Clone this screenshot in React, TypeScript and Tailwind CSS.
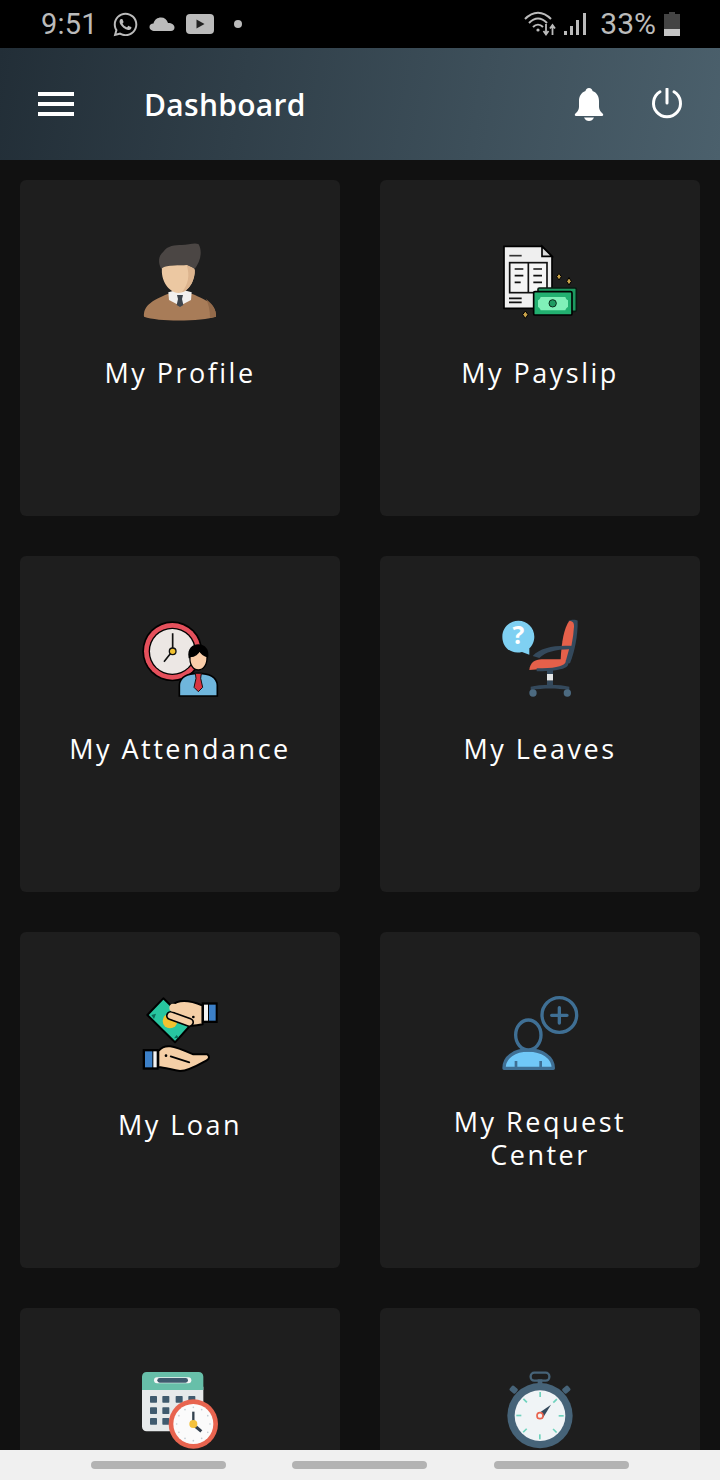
import React from 'react';
import { FaWhatsapp } from 'react-icons/fa';

const ProfileIcon = () => (
  <svg viewBox="0 0 300 285" className="w-[100px] h-[95px]">
    <path d="M94 102C84 84 84 64 100 50C112 32 135 30 155 30C175 30 195 22 206 28C218 50 212 80 192 105L170 90C140 92 110 88 96 104Z" fill="#4b4644" />
    <path d="M42 245C40 215 60 198 115 176L150 190L185 176C240 198 260 215 258 245C220 258 90 262 42 245Z" fill="#a87c58" />
    <path d="M228 192C245 205 258 220 258 245L240 248C240 225 236 208 228 192Z" fill="#936a4a" />
    <path d="M115 172L140 165H160L185 172L183 195L150 212L117 195Z" fill="#f2f0ee" />
    <path d="M141 180H159L156 192L160 210L150 216L140 210L144 192Z" fill="#3d444c" />
    <path d="M96 100C110 88 150 92 170 90C180 95 190 98 194 104C196 130 180 172 145 174C115 172 92 135 96 100Z" fill="#ecc8a2" />
    <path d="M170 90C180 95 190 98 194 104C196 130 180 165 155 172C175 150 180 120 170 90Z" fill="#dcb48e" />
  </svg>
);

const PayslipIcon = () => (
  <svg viewBox="0 0 300 285" className="w-[100px] h-[95px]">
    <path d="M42 34H156L186 64V190H140V220H42Z" fill="#efefef" stroke="#000" strokeWidth="5" />
    <path d="M156 34V64H186Z" fill="#d9d9d9" stroke="#000" strokeWidth="5" />
    <path d="M58 62H95" stroke="#333" strokeWidth="5" />
    <rect x="59" y="83" width="112" height="90" fill="#f5f5f5" stroke="#111" strokeWidth="5" />
    <path d="M115 83V173" stroke="#111" strokeWidth="5" />
    <path d="M74 102H100M74 122H100M74 142H92M130 102H156M130 122H156M130 142H156M57 190H95M57 202H95" stroke="#111" strokeWidth="5" />
    <rect x="144" y="159" width="115" height="70" rx="4" fill="#1d9a60" stroke="#0a1a12" strokeWidth="5" />
    <rect x="131" y="170" width="115" height="70" rx="4" fill="#22b070" stroke="#000" strokeWidth="5" />
    <path d="M152 186H226C228 192 230 194 234 196V216C230 218 228 220 226 226H152C150 220 148 218 144 216V196C148 194 150 192 152 186Z" fill="#80f0b8" />
    <circle cx="188" cy="205" r="11" fill="#1f9c62" stroke="#0a2a1a" strokeWidth="3" />
    <path d="M207 115L214 125L207 135L200 125ZM237 128L244 139L237 150L230 139ZM106 228L114 239L106 250L98 239Z" fill="#c8a24a" stroke="#000" strokeWidth="3" />
  </svg>
);

const AttendanceIcon = () => (
  <svg viewBox="0 3 300 285" className="w-[100px] h-[95px]">
    <circle cx="127" cy="124" r="90" fill="#000" />
    <circle cx="127" cy="124" r="85" fill="#e5505c" />
    <circle cx="127" cy="124" r="71" fill="#000" />
    <circle cx="127" cy="124" r="67" fill="#ece7e4" />
    <path d="M128 70V122L102 155" fill="none" stroke="#111" strokeWidth="5" />
    <circle cx="128" cy="124" r="10" fill="#f2c230" stroke="#111" strokeWidth="4" />
    <path d="M148 258V225C150 200 175 190 205 190C235 190 260 200 262 225V258Z" fill="#6fb6dc" stroke="#000" strokeWidth="5" />
    <path d="M196 190H214L212 205L218 232L205 245L192 232L198 205Z" fill="#d8343f" stroke="#111" strokeWidth="3" />
    <path d="M176 145C170 115 188 103 205 103C224 103 240 118 234 145Z" fill="#000" />
    <path d="M180 140C195 138 205 130 208 122C215 132 225 138 231 140C232 165 220 180 205 180C190 180 178 165 180 140Z" fill="#f9cda9" stroke="#000" strokeWidth="4" />
  </svg>
);

const LeavesIcon = () => (
  <svg viewBox="0 3 300 285" className="w-[100px] h-[95px]">
    <path d="M85 32C112 32 133 53 133 80C133 95 126 108 118 115L118 134L96 126C60 134 37 110 37 80C37 53 58 32 85 32Z" fill="#7fd0f2" />
    <text x="85" y="102" textAnchor="middle" fontSize="74" fontWeight="700" fill="#fff" fontFamily="'Open Sans', sans-serif">?</text>
    <path d="M236 32C244 28 258 28 263 32C264 75 254 125 240 160H226Z" fill="#34495c" />
    <path d="M212 150C214 100 222 52 238 33C250 33 252 40 252 50C250 85 242 120 234 150Z" fill="#e5604a" />
    <path d="M118 180C120 158 135 148 155 148H222C232 148 232 168 222 172C190 182 150 174 118 180Z" fill="#e5604a" />
    <path d="M128 138C150 112 200 104 250 108L250 118C205 116 168 124 148 144Z" fill="#34495c" />
    <path d="M238 115L250 115L234 165C230 178 190 184 140 184L140 175C190 175 218 170 226 158Z" fill="#34495c" />
    <rect x="171" y="184" width="18" height="28" fill="#e4e6e6" />
    <rect x="171" y="180" width="18" height="12" fill="#34495c" />
    <path d="M122 240V230C150 222 210 222 238 230V240C200 234 160 234 122 240Z" fill="#34495c" />
    <rect x="171" y="212" width="18" height="14" fill="#34495c" />
    <circle cx="129" cy="249" r="11" fill="#4c6a80" />
    <circle cx="232" cy="249" r="11" fill="#4c6a80" />
  </svg>
);

const LoanIcon = () => (
  <svg viewBox="0 6 300 285" className="w-[100px] h-[95px]">
    <path d="M52 90L100 40L182 120L135 172Z" fill="#27c6a0" stroke="#000" strokeWidth="6" strokeLinejoin="round" />
    <circle cx="120" cy="108" r="22" fill="#f2c230" />
    <path d="M78 86L64 90L72 102ZM140 150L132 160L146 158Z" fill="#0b6b58" />
    <path d="M125 62C145 42 175 44 218 62V118C200 122 185 125 170 120L135 100Z" fill="#f5cfa6" stroke="#000" strokeWidth="6" strokeLinejoin="round" />
    <path d="M122 92L178 112" stroke="#000" strokeWidth="28" strokeLinecap="round" />
    <path d="M122 92L178 112" stroke="#f5cfa6" strokeWidth="18" strokeLinecap="round" />
    <path d="M130 68L190 76" stroke="#f5cfa6" strokeWidth="24" strokeLinecap="round" />
    <circle cx="190" cy="96" r="4" fill="#000" />
    <rect x="215" y="52" width="48" height="62" fill="#000" />
    <rect x="222" y="59" width="12" height="48" fill="#f2f2f2" />
    <rect x="237" y="59" width="20" height="48" fill="#3c80c8" />
    <path d="M85 198C105 175 125 180 190 208L232 208C240 214 238 222 230 226C205 240 175 258 150 258C125 254 105 248 85 246Z" fill="#f5cfa6" stroke="#000" strokeWidth="6" strokeLinejoin="round" />
    <circle cx="108" cy="212" r="4" fill="#000" />
    <path d="M122 214L178 232" stroke="#000" strokeWidth="5" strokeLinecap="round" />
    <rect x="38" y="192" width="48" height="62" fill="#000" />
    <rect x="45" y="199" width="22" height="48" fill="#3c80c8" />
    <rect x="70" y="199" width="10" height="48" fill="#f2f2f2" />
  </svg>
);

const RequestIcon = () => (
  <svg viewBox="0 6 300 285" className="w-[100px] h-[95px]">
    <path d="M42 250C42 215 75 195 115 195C155 195 190 215 190 250Z" fill="#70c8f8" stroke="#3f6f94" strokeWidth="10" strokeLinejoin="round" />
    <path d="M78 228V250M152 228V250" stroke="#3f6f94" strokeWidth="8" />
    <ellipse cx="115" cy="150" rx="38" ry="45" fill="#1e1e1e" stroke="#3f6f94" strokeWidth="10" />
    <circle cx="208" cy="90" r="52" fill="#1e1e1e" stroke="#3f6f94" strokeWidth="10" />
    <path d="M208 68V114M185 91H231" stroke="#3f6f94" strokeWidth="10" strokeLinecap="round" />
  </svg>
);

const dots = [0, 30, 60, 90, 120, 150, 180, 210, 240, 270, 300, 330];

const LeaveCalendarIcon = () => (
  <svg viewBox="0 9 300 285" className="w-[100px] h-[95px]">
    <path d="M36 80H220V200C220 208 214 214 206 214H50C42 214 36 208 36 200Z" fill="#e6e9ea" />
    <path d="M50 36H206C214 36 220 42 220 50V90H36V50C36 42 42 36 50 36Z" fill="#67bfa9" />
    <rect x="72" y="52" width="112" height="18" rx="9" fill="#f4f6f6" />
    <rect x="82" y="54" width="92" height="14" rx="7" fill="#3f5a6e" />
    {[60, 97, 137, 175].map((x) =>
      [108, 142, 174].map((y) => <rect key={`${x}-${y}`} x={x} y={y} width="21" height="20" rx="2" fill="#3f5a6e" />),
    )}
    <circle cx="190" cy="192" r="74" fill="#e8644f" />
    <circle cx="190" cy="192" r="60" fill="#fbfbfb" />
    {dots.map((a) => (
      <circle
        key={a}
        cx={190 + 50 * Math.cos((a * Math.PI) / 180)}
        cy={192 + 50 * Math.sin((a * Math.PI) / 180)}
        r="2.5"
        fill="#c3ccd2"
      />
    ))}
    <path d="M190 155V190" stroke="#33414e" strokeWidth="7" />
    <path d="M195 198L214 214" stroke="#33414e" strokeWidth="9" />
    <circle cx="190" cy="192" r="12" fill="#f4c23c" />
  </svg>
);

const StopwatchIcon = () => (
  <svg viewBox="0 9 300 285" className="w-[100px] h-[95px]">
    <rect x="122" y="38" width="56" height="24" rx="11" fill="none" stroke="#466378" strokeWidth="7" />
    <rect x="143" y="58" width="14" height="20" fill="#466378" />
    <rect x="60" y="80" width="22" height="18" rx="4" transform="rotate(40 71 89)" fill="#466378" />
    <rect x="218" y="80" width="22" height="18" rx="4" transform="rotate(-40 229 89)" fill="#466378" />
    <circle cx="150" cy="167" r="98" fill="#466378" />
    <circle cx="150" cy="167" r="76" fill="#f0f4f6" />
    {[0, 45, 90, 135, 180, 225, 270, 315].map((a) => (
      <rect key={a} x="148" y="96" width="5" height="15" transform={`rotate(${a} 150 167)`} fill="#6fd2bd" />
    ))}
    <path d="M146 160L183 134L160 172Z" fill="#33495c" />
    <circle cx="150" cy="167" r="9" fill="#f5f5f5" stroke="#e8644f" strokeWidth="5" />
  </svg>
);

const items = [
  { id: 'profile', label: 'My Profile', icon: <ProfileIcon /> },
  { id: 'payslip', label: 'My Payslip', icon: <PayslipIcon /> },
  { id: 'attendance', label: 'My Attendance', icon: <AttendanceIcon /> },
  { id: 'leaves', label: 'My Leaves', icon: <LeavesIcon /> },
  { id: 'loan', label: 'My Loan', icon: <LoanIcon /> },
  { id: 'request', label: 'My Request Center', icon: <RequestIcon />, twoLine: true },
  // labels of the last row sit below the fold
  { id: 'calendar', icon: <LeaveCalendarIcon /> },
  { id: 'stopwatch', icon: <StopwatchIcon /> },
];

const StatusBar = () => (
  <div className="h-12 bg-black flex items-center pl-[41px] pr-[40px] text-[#bbbbbb] font-['Roboto',sans-serif] text-[29px] shrink-0">
    <span className="leading-none tracking-[0.2px]">9:51</span>
    <FaWhatsapp className="ml-[14px] w-[27px] h-[27px]" />
    <svg viewBox="0 0 26 16" className="ml-[10px] w-[26px] h-4">
      <path d="M6 15C2.500 15 0.500 13 0.500 11C0.500 9 2 7.500 4.500 7.500C5.500 3.500 8.500 1.500 12 1.500C15.500 1.500 18 3.500 19 7C23 7 25.500 9 25.500 11.500C25.500 13.500 24 15 22 15Z" fill="#bbb" />
    </svg>
    <svg viewBox="0 0 28 20" className="ml-[11px] w-7 h-5">
      <rect x="0" y="0" width="28" height="20" rx="4" fill="#bbb" />
      <path d="M10.500 5.500L18.500 10L10.500 14.500Z" fill="#222" />
    </svg>
    <span className="ml-5 w-2 h-2 rounded-full bg-[#bbbbbb]" />
    <svg viewBox="0 0 32 26" className="ml-auto w-8 h-[26px]" fill="none" stroke="#bbb">
      <path d="M1 8C9 -0.500 19 -0.500 27 8" strokeWidth="2" />
      <path d="M5 12C11 6 17 6 23 12" strokeWidth="2" />
      <path d="M9 16C12 13 16 13 19 16" strokeWidth="2" />
      <circle cx="14" cy="19" r="1.600" fill="#bbb" stroke="none" />
      <path d="M22 13V23M19.500 20L22 23.500L24.500 20M28.500 15V24M26 17.500L28.500 14L31 17.500" strokeWidth="1.800" />
    </svg>
    <svg viewBox="0 0 24 24" className="ml-[7px] w-6 h-6" fill="#bbb">
      <rect x="1" y="19" width="3" height="4" />
      <rect x="7" y="14" width="3" height="9" />
      <rect x="13" y="8" width="3" height="15" />
      <rect x="20" y="1" width="3" height="22" />
    </svg>
    <span className="ml-[13px] leading-none text-[30px]">33%</span>
    <svg viewBox="0 0 16 24" className="ml-[8px] w-4 h-6">
      <path d="M5 0H11V2H16V24H0V2H5Z" fill="#444" />
      <rect x="0" y="17" width="16" height="7" fill="#c4c4c4" />
    </svg>
  </div>
);

const Header = () => (
  <div className="h-28 shrink-0 flex items-center pl-[38px] pr-[37px] bg-[linear-gradient(100deg,#222e37,#4b606c)] text-white">
    <div className="w-9 flex flex-col gap-[6px]">
      <span className="h-1 bg-white" />
      <span className="h-1 bg-white" />
      <span className="h-1 bg-white" />
    </div>
    <h1 className="ml-[70px] text-[30px] tracking-[0.3px] font-semibold font-['Open_Sans',sans-serif]">Dashboard</h1>
    <svg viewBox="0 0 30 34" className="ml-auto w-[30px] h-[34px]" fill="#fff">
      <path d="M15 1C17 1 18.500 2.500 18.500 4C23 5.500 25 9.500 25 14V20C25 23 27 25 29 27C29.500 28 29 29 28 29H2C1 29 0.500 28 1 27C3 25 5 23 5 20V14C5 9.500 7 5.500 11.500 4C11.500 2.500 13 1 15 1Z" />
      <path d="M10 30.500H20C19 33 17 34 15 34C13 34 11 33 10 30.500Z" />
    </svg>
    <svg viewBox="0 0 32 32" className="ml-[47px] w-8 h-8" fill="none" stroke="#fff" strokeWidth="3">
      <path d="M16 1V15" strokeLinecap="round" />
      <path d="M9 3.800A13.500 13.500 0 1 0 23 3.800" strokeLinecap="round" />
    </svg>
  </div>
);

const App: React.FC = () => {
  return (
    <div className="w-[720px] h-[1480px] flex flex-col overflow-hidden bg-[#111111] font-['Open_Sans',sans-serif]">
      <StatusBar />
      <Header />
      <div className="flex-1 overflow-hidden px-5 pt-5">
        <div className="grid grid-cols-2 gap-x-10 gap-y-10">
          {items.map((item) => (
            <div key={item.id} className="h-[336px] rounded-md bg-[#1e1e1e] flex flex-col items-center pt-[55px]">
              {item.icon}
              {item.label && (
                <p className={`${item.twoLine ? 'mt-[23px] w-[220px]' : 'mt-[26px]'} text-[27px] leading-[33px] tracking-[2.5px] text-white text-center`}>
                  {item.label}
                </p>
              )}
            </div>
          ))}
        </div>
      </div>
      <div className="h-[30px] shrink-0 bg-[#f0f0f0] grid grid-cols-3 items-center px-[91px] gap-x-[66px]">
        <span className="h-2 w-[135px] rounded-full bg-[#b3b3b3]" />
        <span className="h-2 w-[135px] rounded-full bg-[#b3b3b3]" />
        <span className="h-2 w-[135px] rounded-full bg-[#b3b3b3]" />
      </div>
    </div>
  );
};

export default App;
